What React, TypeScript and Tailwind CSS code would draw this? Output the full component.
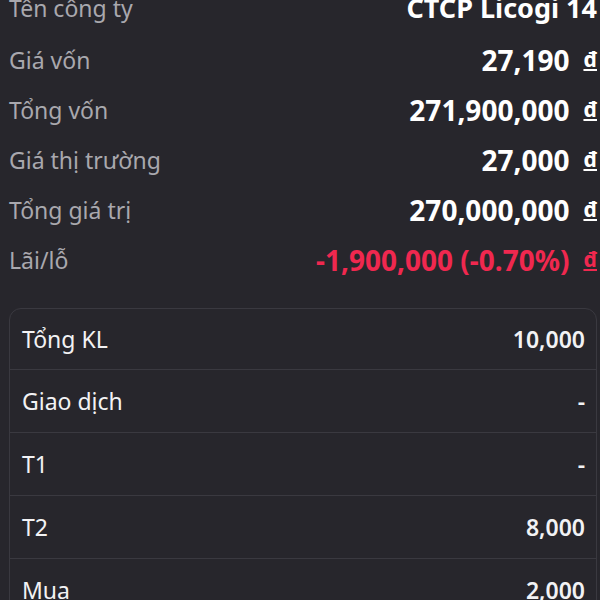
const summary = [
  { label: 'Tên công ty', value: 'CTCP Licogi 14', unit: false },
  { label: 'Giá vốn', value: '27,190', unit: true },
  { label: 'Tổng vốn', value: '271,900,000', unit: true },
  { label: 'Giá thị trường', value: '27,000', unit: true },
  { label: 'Tổng giá trị', value: '270,000,000', unit: true },
  { label: 'Lãi/lỗ', value: '-1,900,000 (-0.70%)', unit: true, loss: true },
]

const volumes = [
  { label: 'Tổng KL', value: '10,000' },
  { label: 'Giao dịch', value: '-' },
  { label: 'T1', value: '-' },
  { label: 'T2', value: '8,000' },
  { label: 'Mua', value: '2,000' },
  { label: 'Bán', value: '-' },
]

export default function App() {
  return (
    <div
      className="w-[600px] h-[600px] overflow-hidden bg-[#27262c]"
      style={{ fontFamily: '"Noto Sans", sans-serif' }}
    >
      <div className="-mt-[18px] pl-[9px] pr-[3px]">
        {summary.map((row, i) => (
          <div
            key={row.label}
            className={`${i === 0 ? 'h-[53px]' : 'h-[50px]'} flex items-center justify-between`}
          >
            <span className="text-[23px] text-[#a9a8ae]">{row.label}</span>
            <span
              className={`flex items-center font-bold ${row.unit ? 'text-[28px]' : 'text-[27px]'} ${row.loss ? 'text-[#f0284f]' : 'text-white'}`}
            >
              {row.value}
              {row.unit && (
                <span className="ml-[14px] text-[21px] font-bold underline underline-offset-2">đ</span>
              )}
            </span>
          </div>
        ))}
      </div>

      <div className="mt-[23px] ml-[9px] mr-[3px] rounded-xl border border-[#3a3940]">
        {volumes.map((row, i) => (
          <div
            key={row.label}
            className={`${i === 0 ? 'h-[60px]' : 'h-[63px] border-t border-[#3a3940]'} flex items-center justify-between pl-[12px] pr-[11px]`}
          >
            <span className="text-[23px] text-[#f2f2f4]">{row.label}</span>
            <span className="text-[23px] font-semibold text-[#f2f2f4]">{row.value}</span>
          </div>
        ))}
      </div>
    </div>
  )
}
